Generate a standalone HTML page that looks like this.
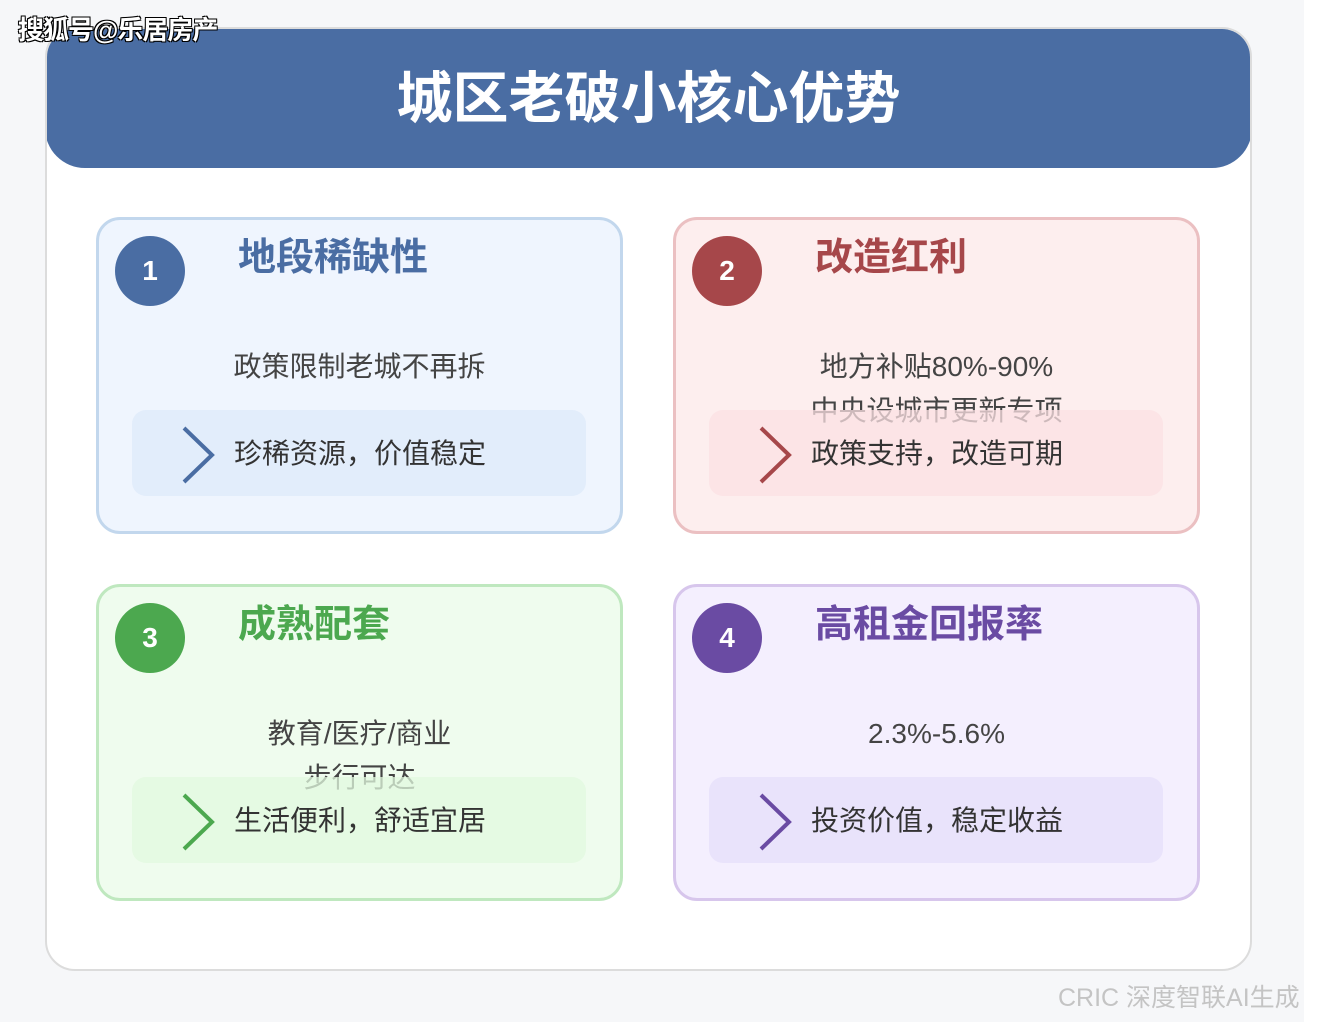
<!DOCTYPE html><html><head><meta charset="utf-8"><style>
*{margin:0;padding:0;box-sizing:border-box}
body{width:1324px;height:1022px;background:#f6f7f9;position:relative;overflow:hidden;font-family:"Liberation Sans","Noto Sans CJK SC",sans-serif}
.strip{position:absolute;left:1304px;top:0;width:20px;height:1022px;background:#fff}
.main{position:absolute;left:45px;top:27px;width:1207px;height:944px;background:#fff;border:2px solid #dcdcdc;border-radius:30px;overflow:hidden}
.hdr{position:absolute;left:-2px;top:-2px;width:1207px;height:141px;background:#4a6da3;border-radius:30px 30px 40px 40px;color:#fff;font-size:56px;font-weight:bold;text-align:center;line-height:144px;letter-spacing:0}
.wm{position:absolute;left:18px;top:10px;font-size:26px;color:#fff;font-weight:bold;text-shadow:1px 1px 0 #000,-1px -1px 0 #000,1px -1px 0 #000,-1px 1px 0 #000;letter-spacing:-1px}
.card{position:absolute;width:527px;height:317px;border:3px solid;border-radius:24px}
.num{position:absolute;left:16px;top:16px;width:70px;height:70px;border-radius:50%;color:#fff;font-size:28px;font-weight:bold;text-align:center;line-height:70px}
.ttl{position:absolute;left:139px;top:13px;font-size:38px;font-weight:bold;line-height:50px}
.sub{position:absolute;left:0;width:100%;text-align:center;font-size:28px;color:#444;line-height:44px;top:125px}
.box{position:absolute;left:33px;top:190px;width:454px;height:86px;border-radius:14px}
.box svg{position:absolute;left:49px;top:16px}
.box span{position:absolute;left:102px;top:1px;line-height:86px;font-size:28px;color:#333}
.ft{position:absolute;left:1058px;top:978px;font-size:25px;color:#c4c4c4}
</style></head><body>
<div class="strip"></div>
<div class="main"><div class="hdr">城区老破小核心优势</div></div>
<div class="wm">搜狐号@乐居房产</div>

<div class="card" style="left:96px;top:217px;background:#eff5fe;border-color:#c2d7ed">
<div class="num" style="background:#4a6da3">1</div><div class="ttl" style="color:#4a6da3">地段稀缺性</div>
<div class="sub">政策限制老城不再拆</div>
<div class="box" style="background:rgba(222,234,250,.75)"><svg width="36" height="58"><path d="M3 2 L31 29 L3 56" fill="none" stroke="#4a6da3" stroke-width="4"/></svg><span>珍稀资源，价值稳定</span></div></div>

<div class="card" style="left:673px;top:217px;background:#fdeeee;border-color:#ebc0c2">
<div class="num" style="background:#a6474a">2</div><div class="ttl" style="color:#a6474a">改造红利</div>
<div class="sub">地方补贴80%-90%<br>中央设城市更新专项</div>
<div class="box" style="background:rgba(251,224,227,.75)"><svg width="36" height="58"><path d="M3 2 L31 29 L3 56" fill="none" stroke="#a6474a" stroke-width="4"/></svg><span>政策支持，改造可期</span></div></div>

<div class="card" style="left:96px;top:584px;background:#effcee;border-color:#bfe8bf">
<div class="num" style="background:#4ca84f">3</div><div class="ttl" style="color:#4ca84f">成熟配套</div>
<div class="sub">教育/医疗/商业<br>步行可达</div>
<div class="box" style="background:rgba(225,249,223,.75)"><svg width="36" height="58"><path d="M3 2 L31 29 L3 56" fill="none" stroke="#4ca84f" stroke-width="4"/></svg><span>生活便利，舒适宜居</span></div></div>

<div class="card" style="left:673px;top:584px;background:#f4effe;border-color:#d7c6ec">
<div class="num" style="background:#6a4ba3">4</div><div class="ttl" style="color:#6a4ba3">高租金回报率</div>
<div class="sub">2.3%-5.6%</div>
<div class="box" style="background:rgba(230,224,250,.85)"><svg width="36" height="58"><path d="M3 2 L31 29 L3 56" fill="none" stroke="#6a4ba3" stroke-width="4"/></svg><span>投资价值，稳定收益</span></div></div>

<div class="ft">CRIC 深度智联AI生成</div>
</body></html>
